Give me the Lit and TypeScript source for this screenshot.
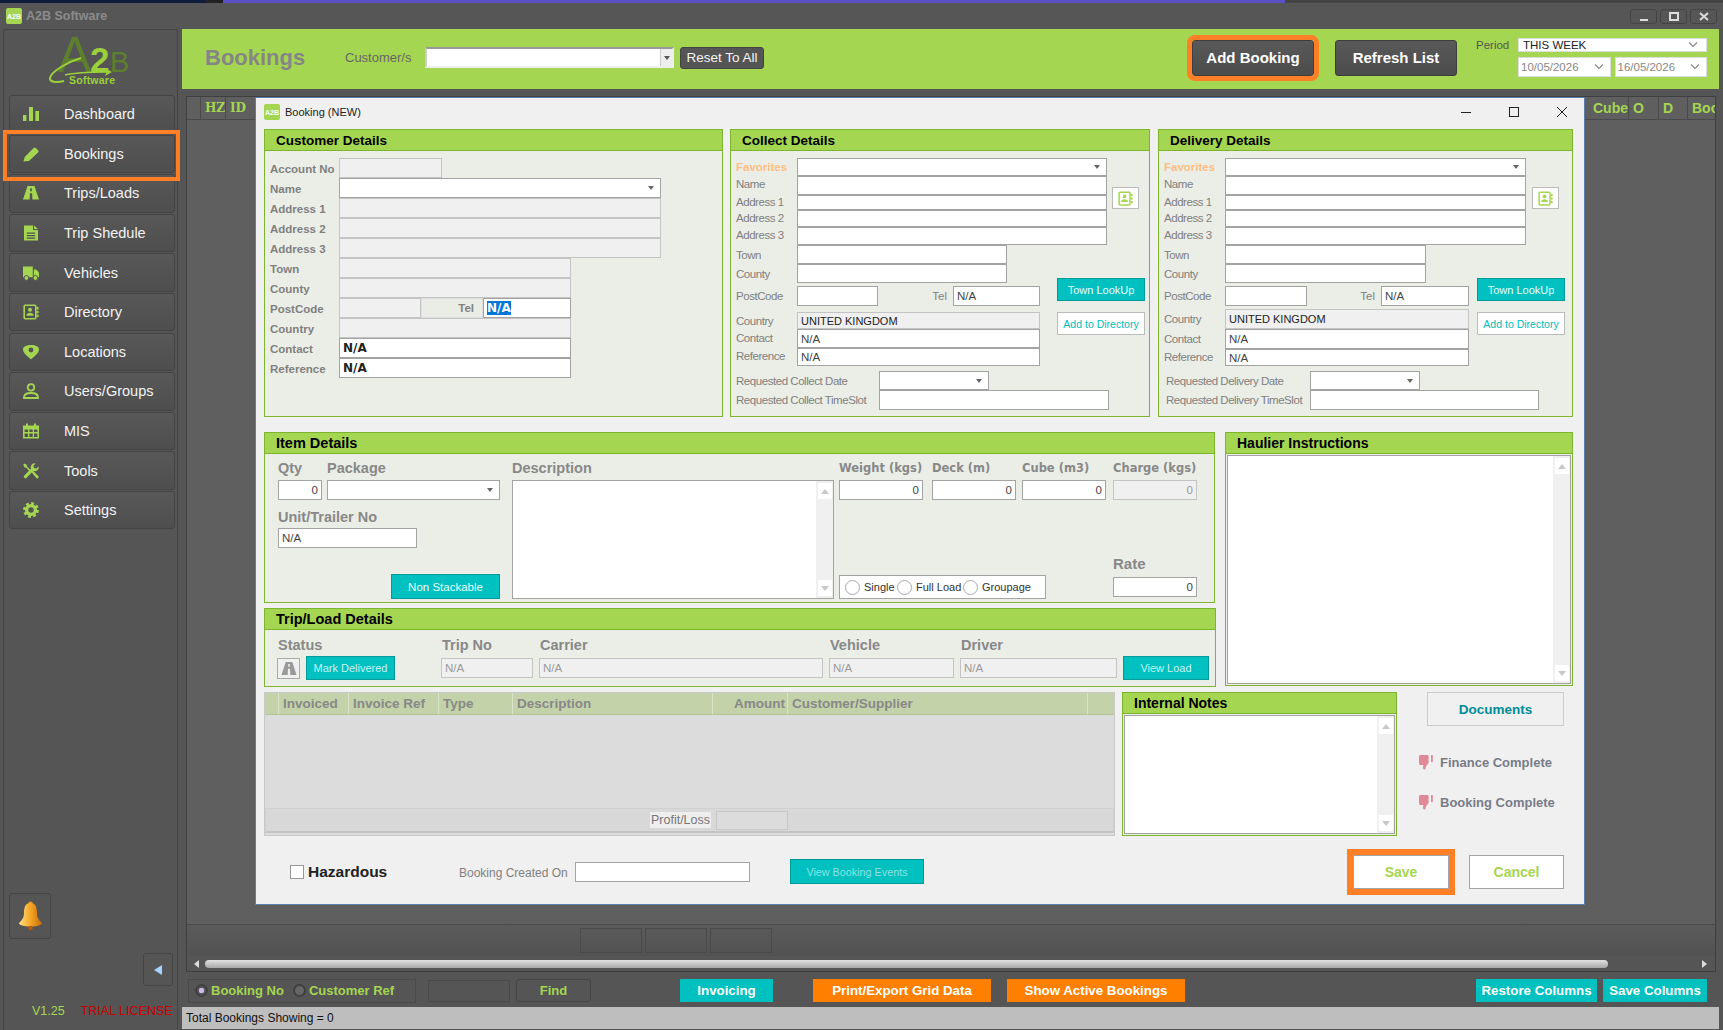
import { LitElement, css, html } from 'lit';
import { customElement } from 'lit/decorators.js';

const G = '#a5d651';

const navIcon = (body: unknown) => html`<svg class="ico" viewBox="0 0 16 16" fill="${G}" fill-rule="evenodd">${body}</svg>`;

const bookIcon = html`<svg class="ico" viewBox="0 0 16 16" fill="${G}"><rect x="1.2" y="1.2" width="11.6" height="13.6" rx="1" fill="none" stroke="${G}" stroke-width="1.6"/><rect x="13.6" y="3" width="2" height="2.4"/><rect x="13.6" y="6.8" width="2" height="2.4"/><rect x="13.6" y="10.6" width="2" height="2.4"/><circle cx="7" cy="5.8" r="2"/><path d="M3.4 11.8c0-2 1.6-3 3.6-3s3.6 1 3.6 3z"/></svg>`;

const nav = [
	{ t: 'Dashboard', i: navIcon(html`<svg viewBox="0 0 16 16"><rect x="0" y="9" width="3.4" height="6"/><rect x="6" y="1" width="4" height="14"/><rect x="12.4" y="5" width="3.6" height="10"/></svg>`) },
	{ t: 'Bookings', a: true, i: navIcon(html`<svg viewBox="0 0 16 16"><path d="M0.5 15.5l1.2-4.6L10.6 2a1.6 1.6 0 0 1 2.2 0l2.2 2.2a1.6 1.6 0 0 1 0 2.2L6 15z"/></svg>`) },
	{ t: 'Trips/Loads', i: navIcon(html`<svg viewBox="0 0 16 16"><path fill-rule="evenodd" d="M4.5 1h7L16 14.5H0zM7.2 3.2l-.1 3h1.800l-.1-3zM6.900 8.200l-.3 6.300h2.800l-.3-6.300z"/></svg>`) },
	{ t: 'Trip Shedule', i: navIcon(html`<svg viewBox="0 0 16 16"><path fill-rule="evenodd" d="M1 0.5h9v4.500h5v10.500H1zM3.800 7.500v1.200h8.400V7.500zM3.800 10v1.200h8.400V10zM3.800 12.500v1.200h8.400v-1.200z"/><path d="M11 0.5l4 3.500h-4z"/></svg>`) },
	{ t: 'Vehicles', i: navIcon(html`<svg viewBox="0 0 16 16"><path d="M0 1.500h9.800v10.800H0zM10.800 4.500h2.600L16 7.600v4.700h-5.200z"/><circle cx="3.400" cy="13" r="2.400" stroke="#555" stroke-width="1"/><circle cx="12.400" cy="13" r="2.400" stroke="#555" stroke-width="1"/></svg>`) },
	{ t: 'Directory', i: bookIcon },
	{ t: 'Locations', i: navIcon(html`<svg viewBox="0 0 16 16"><path fill-rule="evenodd" d="M8 15.500C5 12.600 0 9.200 0 5.600 0 2.600 3.400 1 8 1s8 1.600 8 4.600c0 3.600-5 7-8 9.900zM8 3.600a2.400 2.400 0 1 0 0 4.800 2.400 2.400 0 0 0 0-4.800z"/></svg>`) },
	{ t: 'Users/Groups', i: navIcon(html`<svg viewBox="0 0 16 16" fill="none" stroke="${G}" stroke-width="1.8"><circle cx="8" cy="4.400" r="3.200"/><path d="M1 15v-.6C1 11.600 4 10 8 10s7 1.600 7 4.400v.6z"/></svg>`) },
	{ t: 'MIS', i: navIcon(html`<svg viewBox="0 0 16 16"><path fill-rule="evenodd" d="M3 0.500h2v2h6v-2h2v2h3v13H0v-13h3zM1.600 6.500v2.600h3.400V6.500zM6.300 6.500v2.600h3.400V6.500zM11 6.500v2.600h3.400V6.500zM1.600 10.500v3.400h3.400v-3.400zM6.300 10.500v3.400h3.400v-3.400zM11 10.500v3.400h3.400v-3.400z"/></svg>`) },
	{ t: 'Tools', i: navIcon(html`<svg viewBox="0 0 16 16"><path d="M15.600 3.400a4 4 0 0 1-5.400 4.600L3.600 14.800a1.600 1.600 0 0 1-2.300-2.300L8 5.800A4 4 0 0 1 12.600.4L10.400 2.700l.5 2.400 2.400.5z"/><path d="M1 .5l2.500 1 .5 2 3.500 3.500-1.200 1.200L3.300 4.700l-2-.5L.3 1.700zM8.500 9.300l1.500-1.500 5.200 5.200a1.300 1.300 0 0 1 0 1.900 1.300 1.300 0 0 1-1.900 0z"/></svg>`) },
	{ t: 'Settings', i: navIcon(html`<svg viewBox="0 0 16 16" fill="none" stroke="${G}"><circle cx="8" cy="8" r="4.400" stroke-width="3.400"/><circle cx="8" cy="8" r="6.600" stroke-width="2.600" stroke-dasharray="2.800 2.380"/></svg>`) },
];

type Fld = { w: number; c?: string; t?: unknown };
type Row = { l: string; h: number; mt?: number; lw?: number; lo?: number; b?: boolean; o?: boolean; ind?: boolean; f: Fld[] };

const teal = (t: string, cls: string) => html`<div class="btn teal ${cls}">${t}</div>`;
const scroll = html`<div class="sb"><span class="sbb up"></span><span class="sbb dn"></span></div>`;

const customerRows: Row[] = [
	{ l: 'Account No', h: 20, b: true, f: [{ w: 103, c: 'off' }] },
	{ l: 'Name', h: 20, b: true, f: [{ w: 322, c: 'combo' }] },
	{ l: 'Address 1', h: 20, b: true, f: [{ w: 322, c: 'off' }] },
	{ l: 'Address 2', h: 20, b: true, f: [{ w: 322, c: 'off' }] },
	{ l: 'Address 3', h: 20, b: true, f: [{ w: 322, c: 'off' }] },
	{ l: 'Town', h: 20, b: true, f: [{ w: 232, c: 'off' }] },
	{ l: 'County', h: 20, b: true, f: [{ w: 232, c: 'off' }] },
	{ l: 'PostCode', h: 20, b: true, f: [{ w: 82, c: 'off' }, { w: 62, c: 'telcell', t: 'Tel' }, { w: 88, c: 'tel', t: html`<span class="sel">N/A</span>` }] },
	{ l: 'Country', h: 20, b: true, f: [{ w: 232, c: 'off' }] },
	{ l: 'Contact', h: 20, b: true, f: [{ w: 232, c: 'strong', t: 'N/A' }] },
	{ l: 'Reference', h: 20, b: true, f: [{ w: 232, c: 'strong', t: 'N/A' }] },
];

const collectRows: Row[] = [
	{ l: 'Favorites', h: 18, o: true, f: [{ w: 310, c: 'combo' }] },
	{ l: 'Name', h: 19, lo: 3, f: [{ w: 310 }] },
	{ l: 'Address 1', h: 15, lo: 2, f: [{ w: 310 }] },
	{ l: 'Address 2', h: 17, lo: 2, f: [{ w: 310 }] },
	{ l: 'Address 3', h: 18, lo: 2, f: [{ w: 310 }] },
	{ l: 'Town', h: 19, f: [{ w: 210 }] },
	{ l: 'County', h: 19, f: [{ w: 210 }] },
	{ l: 'PostCode', h: 20, mt: 3, f: [{ w: 81 }, { w: 75, c: 'gaplab', t: 'Tel' }, { w: 87, t: 'N/A' }] },
	{ l: 'Country', h: 17, mt: 6, f: [{ w: 243, c: 'off dark', t: 'UNITED KINGDOM' }] },
	{ l: 'Contact', h: 19, lo: 2, f: [{ w: 243, t: 'N/A' }] },
	{ l: 'Reference', h: 18, lo: 2, f: [{ w: 243, t: 'N/A' }] },
	{ l: 'Requested Collect Date', h: 19, mt: 5, lw: 143, f: [{ w: 110, c: 'combo' }] },
	{ l: 'Requested Collect TimeSlot', h: 20, lw: 143, f: [{ w: 230 }] },
];

const deliveryRows: Row[] = [
	{ l: 'Favorites', h: 18, o: true, f: [{ w: 301, c: 'combo' }] },
	{ l: 'Name', h: 19, lo: 3, f: [{ w: 301 }] },
	{ l: 'Address 1', h: 15, lo: 2, f: [{ w: 301 }] },
	{ l: 'Address 2', h: 17, lo: 2, f: [{ w: 301 }] },
	{ l: 'Address 3', h: 18, lo: 2, f: [{ w: 301 }] },
	{ l: 'Town', h: 19, f: [{ w: 201 }] },
	{ l: 'County', h: 19, f: [{ w: 201 }] },
	{ l: 'PostCode', h: 20, mt: 3, f: [{ w: 82 }, { w: 74, c: 'gaplab', t: 'Tel' }, { w: 88, t: 'N/A' }] },
	{ l: 'Country', h: 20, mt: 3, f: [{ w: 244, c: 'off dark', t: 'UNITED KINGDOM' }] },
	{ l: 'Contact', h: 20, f: [{ w: 244, t: 'N/A' }] },
	{ l: 'Reference', h: 17, lo: 2, f: [{ w: 244, t: 'N/A' }] },
	{ l: 'Requested Delivery Date', h: 19, mt: 5, lw: 146, ind: true, f: [{ w: 110, c: 'combo' }] },
	{ l: 'Requested Delivery TimeSlot', h: 20, lw: 146, ind: true, f: [{ w: 229 }] },
];

const invCols = [
	{ t: '', c: 'c0' },
	{ t: 'Invoiced', c: 'c1' },
	{ t: 'Invoice Ref', c: 'c2' },
	{ t: 'Type', c: 'c3' },
	{ t: 'Description', c: 'c4' },
	{ t: 'Amount', c: 'c5 right' },
	{ t: 'Customer/Supplier', c: 'c6' },
	{ t: '', c: 'c7' },
];

const thumb = html`<svg class="thumb" viewBox="0 0 15 15" fill="#e08a98"><path d="M0 1.500C0 .6.8 0 1.600 0h6.600c.8 0 1.400.6 1.400 1.400v6.400L7 11.600c-.3 1-.3 3-1.600 3-1 0-1.400-1-1.400-2l.4-2.600H1.400C.5 10 0 9.400 0 8.600z"/><rect x="12" y="0" width="1.800" height="7"/></svg>`;

@customElement('app-root')
export class AppRoot extends LitElement {
	static styles = css`
    :host {
      display: block;
      width: 1723px;
      height: 1030px;
      overflow: hidden;
      position: relative;
      background: #555;
      font-family: "Liberation Sans", Arial, sans-serif;
      --green: #a5d651;
      --teal: #00c0c0;
    }
    .strip {
      height: 3px;
      background: linear-gradient(90deg, #0e1c3e 0 205px, #222 205px 223px, #5a4fc4 223px 1285px, #444 1285px 1723px);
    }
    .titlebar {
      height: 26px;
      display: flex;
      align-items: center;
      background: #565656;
      padding: 0 6px;
      gap: 4px;
    }
    .appicon {
      width: 16px;
      height: 16px;
      background: var(--green);
      border-radius: 2px;
      color: #fff;
      font: bold 7px "Liberation Sans", sans-serif;
      display: flex;
      align-items: center;
      justify-content: center;
      flex: none;
    }
    .apptitle {
      color: #8b8b8b;
      font-size: 12.5px;
      font-weight: bold;
    }
    .winbtns {
      margin-left: auto;
      display: flex;
      gap: 3px;
    }
    .winbtn {
      width: 27px;
      height: 15px;
      box-sizing: border-box;
      border: 1px solid #444;
      border-radius: 3px;
      display: flex;
      align-items: center;
      justify-content: center;
    }
    .winbtn svg { width: 12px; height: 9px; }

    .layout {
      display: flex;
      height: 1001px;
      padding-left: 3px;
    }
    .side {
      width: 175px;
      flex: none;
      box-sizing: border-box;
      display: flex;
      flex-direction: column;
      border: 1px solid #444;
      border-bottom: none;
      border-radius: 3px 3px 0 0;
      background: #555;
    }
    .logo {
      height: 65px;
      flex: none;
      padding-left: 41px;
      box-sizing: border-box;
    }
    .logo svg { width: 92px; height: 60px; display: block; }
    .nav {
      display: flex;
      flex-direction: column;
      gap: 1.1px;
      padding-left: 5px;
    }
    .item {
      position: relative;
      box-sizing: border-box;
      width: 166px;
      height: 38.5px;
      border: 1px solid #444;
      border-radius: 3px;
      background: linear-gradient(#585858, #4e4e4e);
      display: flex;
      align-items: center;
      padding-left: 13px;
      color: #f2f2f2;
      font-size: 14.5px;
    }
    .ico { width: 16px; height: 16px; flex: none; }
    .item .ico { margin-right: 25px; }
    .item.active { z-index: 1; }
    .item.active::after {
      content: '';
      position: absolute;
      left: -7px;
      right: -6px;
      top: -6px;
      bottom: -9px;
      border: 4px solid #ff7f27;
      pointer-events: none;
    }
    .bell {
      margin: auto 0 0 5px;
      width: 42px;
      height: 46px;
      box-sizing: border-box;
      border: 1px solid #444;
      border-radius: 3px;
      display: flex;
      align-items: center;
      justify-content: center;
    }
    .collapse {
      align-self: flex-end;
      margin: 14px 4px 0 0;
      width: 30px;
      height: 33px;
      box-sizing: border-box;
      border: 1px solid #444;
      border-radius: 3px;
      display: flex;
      align-items: center;
      justify-content: center;
    }
    .collapse::before {
      content: '';
      border: 5px solid transparent;
      border-left: none;
      border-right: 8px solid #a5d4ff;
    }
    .lic {
      display: flex;
      margin: 16px 0 10px 28px;
      gap: 16px;
      font-size: 12.5px;
      line-height: 18px;
      white-space: nowrap;
    }
    .lic .v { color: var(--green); }
    .lic .t { color: #c80000; }

    .main {
      width: 1537px;
      margin-left: 4px;
      flex: none;
      display: flex;
      flex-direction: column;
    }
    .head {
      height: 60px;
      flex: none;
      background: var(--green);
      display: flex;
      align-items: center;
      padding: 0 12px 3px 23px;
      box-sizing: border-box;
    }
    .head h1 {
      width: 140px;
      margin: 0;
      font-size: 22px;
      color: #858585;
      flex: none;
    }
    .cust { width: 80px; font-size: 13px; color: #666; flex: none; }
    .custbox {
      width: 249px;
      height: 21px;
      box-sizing: border-box;
      background: #fff;
      border: 2px solid #eee;
      border-top-color: #999;
      border-left-color: #ccc;
      display: flex;
      justify-content: flex-end;
    }
    .custbox span {
      width: 11px;
      border-left: 1px solid #ccc;
      background: #eee;
      display: flex;
      align-items: center;
      justify-content: center;
    }
    .custbox span::before, .f.combo::after {
      content: '';
      border: 3.5px solid transparent;
      border-bottom: none;
      border-top: 4px solid #555;
    }
    .reset {
      margin-left: 6px;
      width: 84px;
      height: 22px;
      background: #555;
      color: #f4f4f4;
      font-size: 13.5px;
      border: 1px solid #444;
      border-radius: 3px;
    }
    .big {
      width: 122px;
      height: 36px;
      background: linear-gradient(#595959, #4c4c4c);
      border: 1px solid #3e3e3e;
      border-radius: 3px;
      color: #fff;
      font-size: 15px;
      font-weight: bold;
    }
    .add { margin-left: auto; outline: 5px solid #ff7f27; }
    .refresh { margin-left: 21px; }
    .btn {
      box-sizing: border-box;
      display: flex;
      align-items: center;
      justify-content: center;
      white-space: nowrap;
      flex: none;
    }
    .period {
      margin-left: 19px;
      width: 42px;
      align-self: flex-start;
      margin-top: 10px;
      font-size: 11.5px;
      color: #555;
    }
    .dates {
      width: 189px;
      display: flex;
      flex-direction: column;
      gap: 5px;
    }
    .dates div { display: flex; gap: 4px; }
    .drop {
      box-sizing: border-box;
      height: 20px;
      flex: 1;
      background: #fff;
      border: 1px solid #ddd;
      font-size: 11.5px;
      color: #222;
      padding: 0 4px;
      display: flex;
      align-items: center;
      justify-content: space-between;
    }
    .drop.gr { color: #888; padding: 0 2px; }
    .drop svg { width: 10px; height: 6px; margin-right: 4px; }

    .grid {
      margin: 7px 0 0 4px;
      width: 1530px;
      height: 876px;
      box-sizing: border-box;
      border: 1px solid #3f3f3f;
      background: #5f5f5f;
      display: flex;
      flex-direction: column;
      flex: none;
    }
    .ghead {
      height: 22px;
      display: flex;
      flex: none;
      border-bottom: 1px solid #4a4a4a;
      color: var(--green);
      font: bold 12px "DejaVu Serif", serif;
    }
    .ghead div {
      box-sizing: border-box;
      border-right: 1px solid #4a4a4a;
      padding-left: 4px;
      line-height: 22px;
      overflow: hidden;
      white-space: nowrap;
    }
    .ghead .sans { font: bold 14px/22px "Liberation Sans", sans-serif; }
    .g0 { width: 14px; }
    .g1 { width: 25px; }
    .g2 { flex: 1; border: none !important; }
    .ghead .g3 { width: 44px; padding-left: 8px; }
    .g4 { width: 30px; }
    .g5 { width: 29px; }
    .g6 { width: 27px; border: none !important; }
    .gspace { flex: 1; }
    .gfoot {
      height: 32px;
      flex: none;
      border-top: 1px solid #4a4a4a;
      background: linear-gradient(#5b5b5b, #525252);
      display: flex;
      align-items: center;
      gap: 3px;
      padding-left: 393px;
      box-sizing: border-box;
    }
    .gfoot span {
      width: 62px;
      height: 25px;
      box-sizing: border-box;
      border: 1px solid #4a4a4a;
    }
    .hbar {
      height: 15px;
      flex: none;
      display: flex;
      align-items: center;
      padding: 0 8px 0 7px;
      background: #555;
    }
    .hbar i { border: 4px solid transparent; }
    .hbar .l { border-left: none; border-right: 5px solid #ddd; }
    .hbar .r { border-right: none; border-left: 5px solid #ddd; }
    .hbar b {
      display: block;
      width: 1403px;
      height: 8px;
      margin: 0 auto 0 6px;
      border-radius: 4px;
      background: linear-gradient(#e2e2e2, #a8a8a8);
    }

    .bottom {
      height: 35px;
      flex: none;
      display: flex;
      align-items: center;
      padding: 2px 0 0 6px;
      box-sizing: border-box;
    }
    .radios {
      width: 228px;
      height: 24px;
      box-sizing: border-box;
      border: 1px solid #4a4a4a;
      display: flex;
      align-items: center;
      padding-left: 6px;
      color: var(--green);
      font-size: 13px;
      font-weight: bold;
      flex: none;
    }
    .rd {
      width: 13px;
      height: 13px;
      box-sizing: border-box;
      border-radius: 50%;
      border: 2px solid #3f3f3f;
      background: #666;
      flex: none;
      margin-right: 3px;
    }
    .rd.on { background: radial-gradient(#cdb9f0 0 2.5px, #555 3px); }
    .radios .rd:nth-of-type(2) { margin-left: 9px; }
    .find-in {
      margin-left: 12px;
      width: 82px;
      height: 22px;
      border: 1px solid #4a4a4a;
      box-sizing: border-box;
      flex: none;
    }
    .find {
      margin-left: 6px;
      width: 75px;
      height: 23px;
      border: 1px solid #444;
      border-radius: 3px;
      color: var(--green);
      font-size: 13px;
      font-weight: bold;
    }
    .act {
      height: 23px;
      color: #fff;
      font-size: 13.3px;
      font-weight: bold;
    }
    .act.t { background: var(--teal); }
    .act.o { background: #ff8000; }
    .a1 { margin-left: 89px; width: 93px; }
    .a2 { margin-left: 40px; width: 178px; }
    .a3 { margin-left: 16px; width: 178px; }
    .a4 { margin-left: 291px; width: 121px; }
    .a5 { margin-left: 6px; width: 104px; }
    .status {
      height: 22px;
      flex: none;
      background: #bebebe;
      color: #111;
      font-size: 12px;
      line-height: 22px;
      padding-left: 4px;
    }

    .dialog {
      position: absolute;
      left: 255px;
      top: 97px;
      width: 1330px;
      height: 808px;
      box-sizing: border-box;
      background: #f0f0f0;
      border: 1px solid #5b7fa8;
      padding-left: 8px;
      display: flex;
      flex-direction: column;
    }
    .dtitle {
      height: 31px;
      flex: none;
      box-sizing: border-box;
      display: flex;
      align-items: center;
      font-size: 11px;
      color: #222;
      gap: 5px;
      padding: 0 17px 3px 0;
    }
    .dctl { margin-left: auto; display: flex; gap: 38px; }
    .dctl svg { width: 10px; height: 10px; display: block; }
    .drow { display: flex; flex: none; }
    .r1 { height: 288px; }
    .r2 { height: 254px; margin-top: 15px; }
    .r3 { height: 144px; margin-top: 6px; }
    .r4 { height: 45px; margin-top: 13px; align-items: center; padding-left: 26px; }

    .panel {
      box-sizing: border-box;
      border: 1px solid #7db52f;
      background: #ebeee7;
      display: flex;
      flex-direction: column;
      flex: none;
    }
    .ph {
      height: 21px;
      box-sizing: border-box;
      flex: none;
      background: var(--green);
      border-bottom: 1px solid #7db52f;
      font-size: 14px;
      font-weight: bold;
      color: #000;
      line-height: 21px;
      padding-left: 11px;
    }
    .customer .ph, .collect .ph, .delivery .ph { font-size: 13.5px; }
    .itemp .ph, .tripp .ph { font-size: 14.5px; }
    .customer { width: 459px; }
    .collect { width: 420px; margin-left: 7px; }
    .delivery { width: 415px; margin-left: 8px; }
    .pbody { padding: 7px 0 0 5px; display: grid; flex: 1; }
    .pbody > * { grid-area: 1 / 1; }
    .rows { display: flex; flex-direction: column; }
    .row { display: flex; align-items: center; flex: none; }
    .lab {
      flex: none;
      box-sizing: border-box;
      width: 61px;
      font-size: 11.5px;
      letter-spacing: -0.45px;
      color: #808080;
      white-space: nowrap;
    }
    .lab.b { width: 69px; font-weight: bold; letter-spacing: 0; padding-top: 2px; }
    .lab.o { color: #ffbe80; font-weight: bold; letter-spacing: 0; }
    .lab.ind { padding-left: 2px; }
    .f {
      box-sizing: border-box;
      height: 100%;
      flex: none;
      border: 1px solid #a3a3a3;
      background: #fff;
      font-size: 11.5px;
      color: #444;
      display: flex;
      align-items: center;
      padding: 0 3px;
      overflow: hidden;
      white-space: nowrap;
    }
    .f.off { background: #f0f0f0; border-color: #c4c4c4; }
    .f.dark { color: #222; font-size: 11px; }
    .f.combo::after { margin-left: auto; margin-right: 3px; border-top-color: #666; }
    .f.telcell {
      background: #eaede6;
      border-color: #ddd;
      justify-content: flex-end;
      padding-right: 8px;
      font-weight: bold;
      color: #808080;
    }
    .f.gaplab {
      background: none;
      border: none;
      justify-content: flex-end;
      padding-right: 6px;
      color: #808080;
    }
    .sel { background: #0078d7; color: #fff; font: bold 12px "DejaVu Sans", sans-serif; }
    .f.strong { font: bold 12px "DejaVu Sans", sans-serif; color: #222; }
    .num { justify-content: flex-end; }
    .gray { color: #9a9a9a; }
    .rail {
      display: flex;
      flex-direction: column;
      align-items: flex-end;
      padding-right: 4px;
    }
    .teal {
      background: var(--teal);
      border: 1px solid #009a9a;
      color: #e8ffff;
      font-size: 11px;
    }
    .abook {
      width: 27px;
      height: 22px;
      margin: 29px 6px 0 0;
      background: #fff;
      border: 1px solid #bbb;
    }
    .abook .ico { width: 15px; height: 15px; }
    .delivery .rail { padding-right: 7px; }
    .delivery .abook { margin-right: 6px; }
    .lookup { width: 88px; height: 23px; margin-top: 69px; }
    .adddir {
      width: 88px;
      height: 23px;
      margin-top: 11px;
      background: #fff;
      border: 1px solid #bbb;
      color: #00bcbc;
      font-size: 10.5px;
    }

    .leftcol { width: 952px; flex: none; display: flex; flex-direction: column; gap: 5px; }
    .itemp { height: 171px; width: 951px; }
    .tripp { height: 79px; width: 952px; }
    .haulier { width: 348px; margin-left: 9px; }
    .biglab { font-size: 14.5px; font-weight: bold; color: #888; height: 26px; padding-top: 2px; box-sizing: border-box; display: flex; align-items: center; white-space: nowrap; }
    .itembody { display: flex; padding-left: 13px; flex: 1; }
    .icol1 { width: 222px; display: flex; flex-direction: column; flex: none; }
    .qp { display: flex; gap: 5px; }
    .qp > div { display: flex; flex-direction: column; }
    .h20 { height: 20px; }
    .unitlab { height: 28px; padding-top: 6px; }
    .nonst { width: 109px; height: 25px; align-self: flex-end; margin-top: 26px; font-size: 11.5px; }
    .icol2 { width: 322px; margin-left: 12px; flex: none; display: flex; flex-direction: column; }
    .ta {
      box-sizing: border-box;
      border: 1px solid #a3a3a3;
      background: #fff;
      display: flex;
      justify-content: flex-end;
      flex: 1;
      min-height: 0;
    }
    .icol2 .ta { flex: none; height: 119px; }
    .sb {
      width: 17px;
      background: #f0f0f0;
      display: flex;
      flex-direction: column;
      justify-content: space-between;
      align-items: center;
      padding: 2px 0;
      box-sizing: border-box;
    }
    .sbb {
      width: 14px;
      height: 16px;
      background: #fff;
      display: flex;
      align-items: center;
      justify-content: center;
    }
    .sbb::before { content: ''; border: 4px solid transparent; border-top: none; border-bottom: 5px solid #c8c8c8; }
    .sbb.dn::before { border-bottom: none; border-top: 5px solid #c8c8c8; }
    .icol3 { margin-left: 5px; width: 358px; display: flex; flex-direction: column; flex: none; height: 145px; }
    .wgrid { display: flex; }
    .wgrid > div { width: 84px; display: flex; flex-direction: column; flex: none; }
    .wgrid > div:nth-child(2) { margin-left: 9px; }
    .wgrid > div:nth-child(3) { margin-left: 6px; }
    .wgrid > div:nth-child(4) { margin-left: 7px; }
    .wlab { font: bold 11.5px "DejaVu Sans", sans-serif; color: #888; }
    .wbottom { margin-top: auto; display: flex; justify-content: space-between; align-items: flex-end; }
    .radiobox {
      width: 207px;
      height: 24px;
      box-sizing: border-box;
      border: 1px solid #a3a3a3;
      background: #fff;
      display: flex;
      align-items: center;
      padding-left: 5px;
      font-size: 11px;
      color: #333;
      white-space: nowrap;
    }
    .circ {
      width: 15px;
      height: 15px;
      box-sizing: border-box;
      border: 1px solid #aaa;
      border-radius: 50%;
      background: #fff;
      margin-right: 4px;
      flex: none;
    }
    .s1 { width: 33px; }
    .s2 { width: 47px; }
    .rate { width: 84px; display: flex; flex-direction: column; margin-bottom: 2px; }
    .ratelab { height: 28px; display: flex; align-items: center; font-size: 15px; font-weight: bold; color: #888; }

    .tripbody { display: flex; padding-left: 12px; flex: 1; }
    .tc { display: flex; flex-direction: column; flex: none; }
    .tlab { height: 28px; padding: 2px 0 0 1px; box-sizing: border-box; display: flex; align-items: center; font-size: 14.5px; font-weight: bold; color: #888; white-space: nowrap; }
    .t1 { width: 118px; }
    .t2 { width: 92px; margin-left: 46px; }
    .t3 { width: 284px; margin-left: 6px; }
    .t4 { width: 125px; margin-left: 6px; }
    .t5 { width: 157px; margin-left: 6px; }
    .tstat { display: flex; align-items: center; gap: 6px; height: 24px; margin-top: -2px; }
    .road {
      width: 23px;
      height: 21px;
      box-sizing: border-box;
      border: 1px solid #aaa;
      background: #f0f0f0;
      display: flex;
      align-items: center;
      justify-content: center;
    }
    .road svg { width: 16px; height: 15px; }
    .mark { width: 89px; height: 24px; color: #c8f4f4; }
    .view { width: 86px; height: 24px; margin: 26px 0 0 6px; color: #c8f4f4; }

    .invoice {
      width: 851px;
      flex: none;
      box-sizing: border-box;
      background: #dcdcdc;
      border: 1px solid #c8c8c8;
      display: flex;
      flex-direction: column;
    }
    .ihead {
      height: 21px;
      flex: none;
      background: #c3d2a8;
      display: flex;
      color: #888;
      font: bold 13.5px "Liberation Sans", sans-serif;
      border-bottom: 1px solid #b4c696;
    }
    .ihead div {
      box-sizing: border-box;
      border-right: 1px solid #dbe4ca;
      padding-left: 4px;
      line-height: 22px;
      white-space: nowrap;
    }
    .c0 { width: 14px; }
    .c1 { width: 70px; }
    .c2 { width: 90px; }
    .c3 { width: 74px; }
    .c4 { width: 200px; }
    .c5 { width: 75px; }
    .c6 { width: 300px; }
    .c7 { flex: 1; border: none !important; }
    .ihead .right { text-align: right; padding-right: 2px; }
    .ifoot {
      margin-top: auto;
      height: 25px;
      box-sizing: border-box;
      margin-bottom: 2px;
      border: 1px solid #d0d0d0;
      border-bottom: 2px solid #c4c4c4;
      background: #d8d8d8;
      display: flex;
      align-items: center;
      padding-left: 384px;
    }
    .pl { background: #eee; color: #777; font-size: 12.5px; width: 61px; height: 16px; line-height: 16px; text-align: center; white-space: nowrap; }
    .plf { width: 72px; height: 19px; box-sizing: border-box; border: 1px solid #c8c8c8; margin-left: 5px; background: #dcdcdc; }
    .notes { width: 275px; margin-left: 7px; }
    .notes .ta { margin: 1px; border-color: #a3a3a3; }
    .haulier .ta { margin: 1px; }
    .sidecol { width: 167px; flex: none; display: flex; flex-direction: column; }
    .docs {
      width: 137px;
      height: 34px;
      margin-left: 30px;
      border: 1px solid #ccc;
      color: #008c96;
      font-size: 13.5px;
      font-weight: bold;
    }
    .done {
      margin-left: 22px;
      height: 20px;
      display: flex;
      align-items: center;
      gap: 6px;
      color: #787c88;
      font-size: 13px;
      font-weight: bold;
      white-space: nowrap;
    }
    .done.d1 { margin-top: 26px; }
    .done.d2 { margin-top: 20px; }
    .thumb { width: 15px; height: 15px; flex: none; }

    .haz { width: 169px; display: flex; align-items: center; gap: 4px; flex: none; font-size: 15.5px; font-weight: bold; color: #222; }
    .chk { width: 14px; height: 14px; box-sizing: border-box; border: 1px solid #999; background: #fff; flex: none; }
    .created { width: 116px; padding-top: 3px; font-size: 12px; color: #808080; flex: none; white-space: nowrap; }
    .createdf { width: 175px; height: 20px; flex: none; }
    .vbe { width: 134px; height: 25px; margin-left: 40px; font-size: 10.8px; color: #8ce4e4; }
    .sv {
      width: 96px;
      height: 34px;
      background: #fff;
      border: 1px solid #a3a3a3;
      color: var(--green);
      font-size: 14px;
      font-weight: bold;
    }
    .save { margin-left: 429px; outline: 6px solid #ff7f27; }
    .cancel { margin-left: 20px; width: 95px; }
  `;

	private rows(rows: Row[]) {
		return html`<div class="rows">
      ${rows.map(
			r => html`<div class="row" style="height:${r.h}px;margin-top:${r.mt ?? 0}px">
          <div class="lab ${r.b ? 'b' : ''} ${r.o ? 'o' : ''} ${r.ind ? 'ind' : ''}" style="${r.lw ? `width:${r.lw}px;` : ''}padding-bottom:${r.lo ?? 0}px">${r.l}</div>
          ${r.f.map(f => html`<div class="f ${f.c ?? ''}" style="width:${f.w}px">${f.t ?? ''}</div>`)}
        </div>`,
		)}
    </div>`;
	}

	private rail() {
		return html`<div class="rail">
      <div class="btn abook">${bookIcon}</div>
      ${teal('Town LookUp', 'lookup')}
      <div class="btn adddir">Add to Directory</div>
    </div>`;
	}

	private field(w: string, c = '', t = '') {
		return html`<div class="f h20 ${c}" style="width:${w}">${t}</div>`;
	}

	private chev() {
		return html`<svg viewBox="0 0 10 6" fill="none" stroke="#888" stroke-width="1.2"><path d="M1 .5l4 4 4-4"/></svg>`;
	}

	render() {
		const x = html`<svg viewBox="0 0 12 9" fill="none" stroke="#ddd" stroke-width="2"><path d="M2 1l8 7M10 1l-8 7"/></svg>`;
		return html`
      <div class="strip"></div>
      <div class="titlebar">
        <div class="appicon">A2B</div>
        <div class="apptitle">A2B Software</div>
        <div class="winbtns">
          <div class="winbtn"><svg viewBox="0 0 12 9" fill="#ddd"><rect x="2" y="7" width="8" height="2"/></svg></div>
          <div class="winbtn"><svg viewBox="0 0 12 9" fill="none" stroke="#ddd" stroke-width="2"><rect x="2" y="1" width="8" height="7"/></svg></div>
          <div class="winbtn">${x}</div>
        </div>
      </div>
      <div class="layout">
        <aside class="side">
          <div class="logo">
            <svg viewBox="0 0 92 60">
              <text x="13" y="42" font-family="Liberation Sans" font-size="50" fill="#5e7f2e">A</text>
              <text x="65" y="42" font-family="Liberation Sans" font-size="29" fill="#5e7f2e">B</text>
              <text x="45" y="42" font-family="Liberation Sans" font-size="35" font-weight="bold" fill="#9bd03b">2</text>
              <path d="M36 28C22 32 6 42 5 48c-.5 4 6 5 14 3" fill="none" stroke="#9bd03b" stroke-width="2"/>
              <path d="M20 45C32 42 48 42 62 42" fill="none" stroke="#9bd03b" stroke-width="1.500"/>
              <path d="M60 38l7 4-7 4 1.500-4z" fill="#9bd03b"/>
              <text x="24" y="54" font-family="Liberation Sans" font-size="10.500" font-weight="bold" fill="#9bd03b" textLength="46">Software</text>
            </svg>
          </div>
          <nav class="nav">
            ${nav.map(n => html`<div class="item ${n.a ? 'active' : ''}">${n.i}<span>${n.t}</span></div>`)}
          </nav>
          <div class="bell">
            <svg width="25" height="30" viewBox="0 0 25 30">
              <defs><linearGradient id="bg" x1="0" x2="1"><stop offset="0" stop-color="#ffe08a"/><stop offset=".5" stop-color="#f5a623"/><stop offset="1" stop-color="#c76a08"/></linearGradient></defs>
              <circle cx="12.500" cy="3" r="2.400" fill="#e09a20"/>
              <path d="M12.500 2C7.500 2 6 6 6 12c0 5-2 7-5 10 0 2 5 3.500 11.500 3.500S24 24 24 22c-3-3-5-5-5-10 0-6-1.500-10-6.500-10z" fill="url(#bg)"/>
              <circle cx="12.500" cy="27" r="2.200" fill="#b85c08"/>
            </svg>
          </div>
          <div class="collapse"></div>
          <div class="lic"><span class="v">V1.25</span><span class="t">TRIAL LICENSE</span></div>
        </aside>
        <main class="main">
          <header class="head">
            <h1>Bookings</h1>
            <div class="cust">Customer/s</div>
            <div class="custbox"><span></span></div>
            <div class="btn reset">Reset To All</div>
            <div class="btn big add">Add Booking</div>
            <div class="btn big refresh">Refresh List</div>
            <div class="period">Period</div>
            <div class="dates">
              <div class="drop">THIS WEEK ${this.chev()}</div>
              <div>
                <span class="drop gr">10/05/2026 ${this.chev()}</span>
                <span class="drop gr">16/05/2026 ${this.chev()}</span>
              </div>
            </div>
          </header>
          <section class="grid">
            <div class="ghead">
              <div class="g0"></div><div class="g1">HZ</div><div class="g2">ID</div>
              <div class="g3 sans">Cube</div><div class="g4 sans">O</div><div class="g5 sans">D</div><div class="g6 sans">Boo</div>
            </div>
            <div class="gspace"></div>
            <div class="gfoot"><span></span><span></span><span></span></div>
            <div class="hbar"><i class="l"></i><b></b><i class="r"></i></div>
          </section>
          <div class="bottom">
            <div class="radios"><span class="rd on"></span>Booking No<span class="rd"></span>Customer Ref</div>
            <div class="find-in"></div>
            <div class="btn find">Find</div>
            <div class="btn act t a1">Invoicing</div>
            <div class="btn act o a2">Print/Export Grid Data</div>
            <div class="btn act o a3">Show Active Bookings</div>
            <div class="btn act t a4">Restore Columns</div>
            <div class="btn act t a5">Save Columns</div>
          </div>
          <div class="status">Total Bookings Showing = 0</div>
        </main>
      </div>

      <section class="dialog">
        <div class="dtitle">
          <div class="appicon">A2B</div>
          <span>Booking (NEW)</span>
          <div class="dctl">
            <svg viewBox="0 0 10 10" stroke="#222"><path d="M0 5.500h10"/></svg>
            <svg viewBox="0 0 10 10" stroke="#222" fill="none"><rect x=".5" y=".5" width="9" height="9"/></svg>
            <svg viewBox="0 0 10 10" stroke="#222"><path d="M0 0l10 10M10 0L0 10"/></svg>
          </div>
        </div>

        <div class="drow r1">
          <div class="panel customer">
            <div class="ph">Customer Details</div>
            <div class="pbody">${this.rows(customerRows)}</div>
          </div>
          <div class="panel collect">
            <div class="ph">Collect Details</div>
            <div class="pbody">${this.rows(collectRows)}${this.rail()}</div>
          </div>
          <div class="panel delivery">
            <div class="ph">Delivery Details</div>
            <div class="pbody">${this.rows(deliveryRows)}${this.rail()}</div>
          </div>
        </div>

        <div class="drow r2">
          <div class="leftcol">
            <div class="panel itemp">
              <div class="ph">Item Details</div>
              <div class="itembody">
                <div class="icol1">
                  <div class="qp">
                    <div><div class="biglab">Qty</div>${this.field('44px', 'num', '0')}</div>
                    <div><div class="biglab">Package</div>${this.field('173px', 'combo')}</div>
                  </div>
                  <div class="biglab unitlab">Unit/Trailer No</div>
                  ${this.field('139px', '', 'N/A')}
                  ${teal('Non Stackable', 'nonst')}
                </div>
                <div class="icol2">
                  <div class="biglab">Description</div>
                  <div class="ta">${scroll}</div>
                </div>
                <div class="icol3">
                  <div class="wgrid">
                    <div><div class="biglab wlab">Weight (kgs)</div>${this.field('84px', 'num', '0')}</div>
                    <div><div class="biglab wlab">Deck (m)</div>${this.field('84px', 'num', '0')}</div>
                    <div><div class="biglab wlab">Cube (m3)</div>${this.field('84px', 'num', '0')}</div>
                    <div><div class="biglab wlab">Charge (kgs)</div>${this.field('84px', 'num off gray', '0')}</div>
                  </div>
                  <div class="wbottom">
                    <div class="radiobox">
                      <i class="circ"></i><span class="s1">Single</span>
                      <i class="circ"></i><span class="s2">Full Load</span>
                      <i class="circ"></i><span>Groupage</span>
                    </div>
                    <div class="rate">
                      <div class="ratelab">Rate</div>
                      ${this.field('84px', 'num', '0')}
                    </div>
                  </div>
                </div>
              </div>
            </div>
            <div class="panel tripp">
              <div class="ph">Trip/Load Details</div>
              <div class="tripbody">
                <div class="tc t1">
                  <div class="tlab">Status</div>
                  <div class="tstat">
                    <div class="road"><svg viewBox="0 0 16 16" fill="#999"><path fill-rule="evenodd" d="M4.500 1h7L16 15H0zM7.200 3.200l-.1 3h1.800l-.1-3zM6.900 8.200l-.3 6.800h2.800l-.3-6.800z"/></svg></div>
                    ${teal('Mark Delivered', 'mark')}
                  </div>
                </div>
                <div class="tc t2"><div class="tlab">Trip No</div>${this.field('92px', 'off gray', 'N/A')}</div>
                <div class="tc t3"><div class="tlab">Carrier</div>${this.field('284px', 'off gray', 'N/A')}</div>
                <div class="tc t4"><div class="tlab">Vehicle</div>${this.field('125px', 'off gray', 'N/A')}</div>
                <div class="tc t5"><div class="tlab">Driver</div>${this.field('157px', 'off gray', 'N/A')}</div>
                ${teal('View Load', 'view')}
              </div>
            </div>
          </div>
          <div class="panel haulier">
            <div class="ph">Haulier Instructions</div>
            <div class="ta">${scroll}</div>
          </div>
        </div>

        <div class="drow r3">
          <div class="invoice">
            <div class="ihead">${invCols.map(c => html`<div class=${c.c}>${c.t}</div>`)}</div>
            <div class="ifoot">
              <div class="pl">Profit/Loss</div>
              <div class="plf"></div>
            </div>
          </div>
          <div class="panel notes">
            <div class="ph">Internal Notes</div>
            <div class="ta">${scroll}</div>
          </div>
          <div class="sidecol">
            <div class="btn docs">Documents</div>
            <div class="done d1">${thumb}Finance Complete</div>
            <div class="done d2">${thumb}Booking Complete</div>
          </div>
        </div>

        <div class="drow r4">
          <div class="haz"><span class="chk"></span>Hazardous</div>
          <div class="created">Booking Created On</div>
          <div class="f createdf"></div>
          ${teal('View Booking Events', 'vbe')}
          <div class="btn sv save">Save</div>
          <div class="btn sv cancel">Cancel</div>
        </div>
      </section>
    `;
	}
}
